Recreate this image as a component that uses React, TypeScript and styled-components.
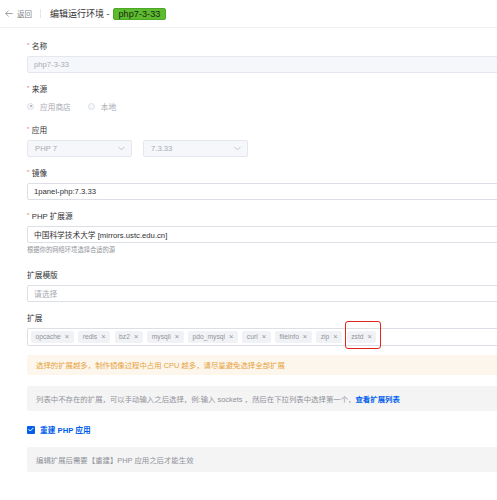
import styled, { createGlobalStyle } from "styled-components";

const GlobalStyle = createGlobalStyle`
  html, body {
    margin: 0;
    padding: 0;
    background: #ffffff;
    overflow: hidden;
  }
  body {
    font-family: "Liberation Sans", "Noto Sans CJK SC", sans-serif;
    color: #303133;
  }
`;

const tags = ["opcache", "redis", "bz2", "mysqli", "pdo_mysql", "curl", "fileinfo", "zip", "zstd"];

function Chevron() {
  return (
    <svg width="7" height="5" viewBox="0 0 10 6" fill="none">
      <path d="M1 1l4 4 4-4" stroke="#b8bcc4" strokeWidth="1.2" strokeLinecap="round" strokeLinejoin="round" />
    </svg>
  );
}

export default function App() {
  return (
    <Page>
      <GlobalStyle />
      <Header>
        <Back>
          <svg width="8" height="7" viewBox="0 0 12 10" fill="none">
            <path d="M11 5H1.5M5 1L1 5l4 4" stroke="#8c8f96" strokeWidth="1.2" strokeLinecap="round" strokeLinejoin="round" />
          </svg>
          <span>返回</span>
        </Back>
        <Divider />
        <Title>编辑运行环境 -</Title>
        <Badge>php7-3-33</Badge>
      </Header>

      <Form>
        <Item>
          <Label $required>名称</Label>
          <Input $disabled>php7-3-33</Input>
        </Item>

        <Item>
          <Label $required>来源</Label>
          <RadioRow>
            <Radio>
              <RadioDot $checked />
              应用商店
            </Radio>
            <Radio>
              <RadioDot />
              本地
            </Radio>
          </RadioRow>
        </Item>

        <Item>
          <Label $required>应用</Label>
          <SelectRow>
            <Select>
              PHP 7
              <Chevron />
            </Select>
            <Select>
              7.3.33
              <Chevron />
            </Select>
          </SelectRow>
        </Item>

        <Item>
          <Label $required>镜像</Label>
          <Input>1panel-php:7.3.33</Input>
        </Item>

        <Item $gap={12.5}>
          <Label $required>PHP 扩展源</Label>
          <Input>中国科学技术大学 [mirrors.ustc.edu.cn]</Input>
          <Hint>根据你的网络环境选择合适的源</Hint>
        </Item>

        <Item>
          <Label>扩展模版</Label>
          <Input $placeholder>请选择</Input>
        </Item>

        <Item>
          <Label>扩展</Label>
          <TagBox>
            {tags.map((t) => (
              <Tag key={t} $marked={t === "zstd"}>
                {t}
                <Close>×</Close>
              </Tag>
            ))}
          </TagBox>
        </Item>

        <Alert $tone="warning">选择的扩展越多，制作镜像过程中占用 CPU 越多，请尽量避免选择全部扩展</Alert>

        <Alert $tone="info" $tall>
          列表中不存在的扩展，可以手动输入之后选择，例:输入 sockets ，然后在下拉列表中选择第一个，
          <Link>查看扩展列表</Link>
        </Alert>

        <CheckRow>
          <CheckBox>
            <svg width="6" height="5" viewBox="0 0 8 6" fill="none">
              <path d="M1 3l2 2 4-4" stroke="#fff" strokeWidth="1.3" strokeLinecap="round" strokeLinejoin="round" />
            </svg>
          </CheckBox>
          重建 PHP 应用
        </CheckRow>

        <Alert $tone="info" $tall>编辑扩展后需要【重建】PHP 应用之后才能生效</Alert>
      </Form>
    </Page>
  );
}

const Page = styled.div`
  width: 497px;
  height: 500px;
  overflow: hidden;
`;

const Header = styled.div`
  height: 28px;
  border-bottom: 1px solid #eef0f3;
  display: flex;
  align-items: center;
  padding-left: 5px;
  box-sizing: border-box;
`;

const Back = styled.div`
  display: flex;
  align-items: center;
  gap: 4px;
  font-size: 7.5px;
  color: #7c7f86;
`;

const Divider = styled.div`
  width: 1px;
  height: 9px;
  background: #e4e7ed;
  margin: 0 9px 0 8px;
`;

const Title = styled.span`
  font-size: 9px;
  color: #303133;
  margin-right: 3px;
`;

const Badge = styled.span`
  display: inline-flex;
  align-items: center;
  height: 12px;
  padding: 0 5px;
  font-size: 9.2px;
  color: #1c2a12;
  background: #5cbb2f;
  border: 1px solid #4ea726;
  border-radius: 2px;
  box-sizing: border-box;
`;

const Form = styled.div`
  padding: 10.5px 0 0 27px;
  width: 520px;
`;

const Item = styled.div<{ $gap?: number }>`
  margin-bottom: ${(p) => p.$gap ?? 9}px;
`;

const Label = styled.div<{ $required?: boolean }>`
  height: 13px;
  line-height: 13px;
  font-size: 7.7px;
  color: #303133;
  margin-bottom: 4px;
  &::before {
    content: ${(p) => (p.$required ? '"*"' : '""')};
    color: #f56c6c;
    font-size: 6px;
    margin-right: ${(p) => (p.$required ? 2.5 : 0)}px;
    vertical-align: 2px;
  }
`;

const Input = styled.div<{ $disabled?: boolean; $placeholder?: boolean }>`
  height: 17px;
  box-sizing: border-box;
  display: flex;
  align-items: center;
  padding: 0 6px;
  font-size: 7.7px;
  border-radius: 2px;
  border: 1px solid ${(p) => (p.$disabled ? "#e4e7ed" : "#dcdfe6")};
  background: ${(p) => (p.$disabled ? "#f5f7fa" : "#ffffff")};
  color: ${(p) => (p.$disabled || p.$placeholder ? "#a8abb2" : "#303133")};
`;

const RadioRow = styled.div`
  height: 15px;
  display: flex;
  align-items: center;
  gap: 17px;
`;

const Radio = styled.div`
  display: flex;
  align-items: center;
  gap: 6px;
  font-size: 7.7px;
  color: #a8abb2;
`;

const RadioDot = styled.span<{ $checked?: boolean }>`
  width: 7px;
  height: 7px;
  border-radius: 50%;
  box-sizing: border-box;
  border: 1px solid #dcdfe6;
  background: #f5f7fa;
  position: relative;
  &::after {
    content: "";
    display: ${(p) => (p.$checked ? "block" : "none")};
    position: absolute;
    left: 1.5px;
    top: 1.5px;
    width: 2px;
    height: 2px;
    border-radius: 50%;
    background: #a8abb2;
  }
`;

const SelectRow = styled.div`
  display: flex;
  gap: 11px;
`;

const Select = styled.div`
  width: 105px;
  height: 17px;
  box-sizing: border-box;
  display: flex;
  align-items: center;
  justify-content: space-between;
  padding: 0 6px 0 7px;
  font-size: 7.7px;
  color: #a8abb2;
  background: #f5f7fa;
  border: 1px solid #e4e7ed;
  border-radius: 2px;
`;

const Hint = styled.div`
  margin-top: 2.5px;
  height: 10px;
  line-height: 10px;
  font-size: 6.3px;
  color: #909399;
`;

const TagBox = styled.div`
  height: 18px;
  box-sizing: border-box;
  border: 1px solid #dcdfe6;
  border-radius: 2px;
  display: flex;
  align-items: center;
  gap: 4.5px;
  padding: 0 3px;
`;

const Tag = styled.span<{ $marked?: boolean }>`
  position: relative;
  height: 12px;
  display: inline-flex;
  align-items: center;
  gap: 4px;
  padding: 0 4.5px;
  font-size: 6.7px;
  color: #909399;
  background: #f0f2f5;
  border-radius: 2px;
  &::after {
    content: "";
    display: ${(p) => (p.$marked ? "block" : "none")};
    position: absolute;
    left: -2px;
    right: -5px;
    top: -10px;
    bottom: -6px;
    border: 1.5px solid #e5231d;
    border-radius: 3px;
  }
`;

const Close = styled.span`
  font-size: 7.5px;
  color: #909399;
`;

const Alert = styled.div<{ $tone: "warning" | "info"; $tall?: boolean }>`
  height: ${(p) => (p.$tall ? 25 : 20)}px;
  box-sizing: border-box;
  display: flex;
  align-items: center;
  padding-left: 9px;
  margin-bottom: 11px;
  border-radius: 2px;
  font-size: 7.4px;
  white-space: nowrap;
  background: ${(p) => (p.$tone === "warning" ? "#fdf6ec" : "#f4f4f5")};
  color: ${(p) => (p.$tone === "warning" ? "#e6a23c" : "#909399")};
`;

const Link = styled.span`
  color: #005eeb;
  font-weight: bold;
`;

const CheckRow = styled.div`
  margin: 14px 0 12px;
  height: 10px;
  display: flex;
  align-items: center;
  gap: 5px;
  font-size: 7.7px;
  font-weight: bold;
  color: #005eeb;
`;

const CheckBox = styled.span`
  width: 8px;
  height: 8px;
  border-radius: 1px;
  background: #005eeb;
  display: flex;
  align-items: center;
  justify-content: center;
`;
